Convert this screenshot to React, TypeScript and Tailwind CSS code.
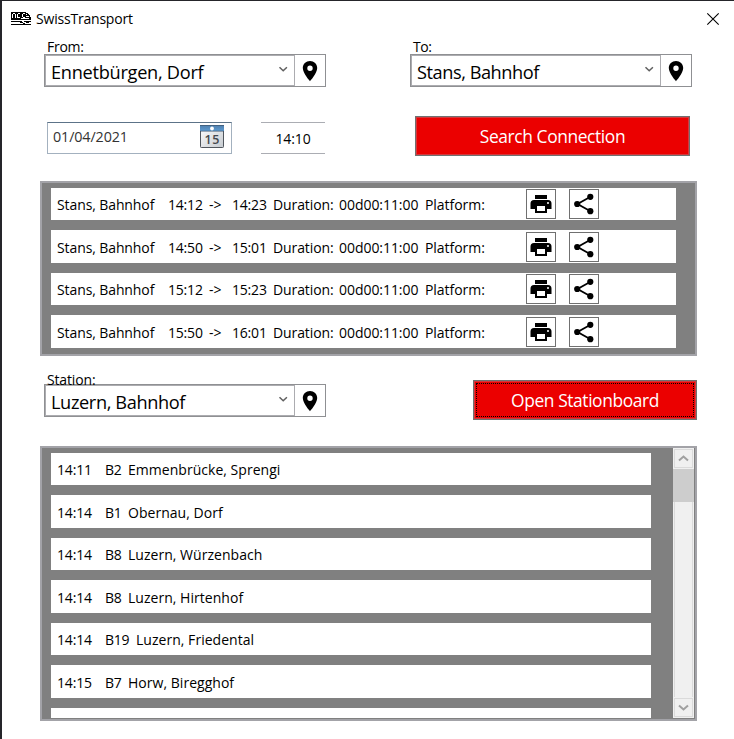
import React from "react";

const connections = [
  { dep: "14:12", arr: "14:23", h: "h-[32px] leading-[34px]", mb: "mb-[10px]", pt: "pt-px" },
  { dep: "14:50", arr: "15:01", h: "h-[33px] leading-[35px]", mb: "mb-[10px]", pt: "pt-[2px]" },
  { dep: "15:12", arr: "15:23", h: "h-[32px] leading-[34px]", mb: "mb-[10px]", pt: "pt-px" },
  { dep: "15:50", arr: "16:01", h: "h-[33px] leading-[36px]", mb: "", pt: "pt-[2px]" },
];

const departures = [
  { time: "14:11", line: "B2", dest: "Emmenbrücke, Sprengi", h: "h-[32px] leading-[33px]", w: "w-[23px]" },
  { time: "14:14", line: "B1", dest: "Obernau, Dorf", h: "h-[33px] leading-[35px]", w: "w-[23px]" },
  { time: "14:14", line: "B8", dest: "Luzern, Würzenbach", h: "h-[32px] leading-[33px]", w: "w-[23px]" },
  { time: "14:14", line: "B8", dest: "Luzern, Hirtenhof", h: "h-[33px] leading-[35px]", w: "w-[23px]" },
  { time: "14:14", line: "B19", dest: "Luzern, Friedental", h: "h-[32px] leading-[33px]", w: "w-[31px]" },
  { time: "14:15", line: "B7", dest: "Horw, Biregghof", h: "h-[33px] leading-[35px]", w: "w-[23px]" },
];

function AppLogo() {
  return (
    <svg width="20" height="14" viewBox="0 0 20 14" fill="none" className="shrink-0" shapeRendering="crispEdges">
      <path d="M0 0H15V1H17V2H18V3H19V5H20V8H0Z" fill="#000" />
      <path d="M1.5 2V6M2 1.5H4M4.5 2V6M6.5 2V6M7 1.5H9M7 5.5H9M11.5 2V5M12 1.5H14M12 5.5H14M15 2.5H16M15 4.5H18M10 6.5H18" stroke="#fff" strokeWidth="1" />
      <path d="M0 9.5H11M13 9.5H20M0 12.5H20" stroke="#000" strokeWidth="1" />
      <path d="M9 10.5H12M12 11.5H14M15 10.5H18" stroke="#000" strokeWidth="1" />
    </svg>
  );
}

function Pin() {
  return (
    <svg width="24" height="24" viewBox="0 0 24 24" fill="#000">
      <path d="M12 2C8 2 4.8 5.1 4.8 9.1 4.8 14.3 12 22.3 12 22.3S19.2 14.3 19.2 9.1C19.2 5.1 16 2 12 2Zm0 10a2.7 2.7 0 1 1 0-5.4 2.7 2.7 0 0 1 0 5.4Z" />
    </svg>
  );
}

function StationPicker({ value, tracking }: { value: string; tracking: string }) {
  return (
    <div className="flex h-[33px] w-[282px] border border-[#8f9093] bg-white">
      <div className="flex h-[31px] w-[250px] border border-[#acacb0] bg-white">
        <div className={`h-[27px] w-[232px] overflow-hidden pl-[5px] text-[18.2px] leading-[32px] whitespace-nowrap ${tracking}`}>
          {value}
        </div>
        <svg width="10" height="7" viewBox="0 0 10 7" className="mt-[10px]" fill="none">
          <path d="M1.5 1.2 5.2 4.8 8.9 1.2" stroke="#606060" strokeWidth="1.5" />
        </svg>
      </div>
      <div className="flex w-[29px] items-center justify-center">
        <Pin />
      </div>
    </div>
  );
}

function IconButton({ children }: { children: React.ReactNode }) {
  return (
    <div className="flex h-[30px] w-[30px] shrink-0 items-center justify-center border border-[#707070] bg-white">{children}</div>
  );
}

function CalendarIcon() {
  return (
    <svg width="24" height="23" viewBox="0 0 24 23">
      <defs>
        <linearGradient id="calHead" x1="0" y1="0" x2="0" y2="1">
          <stop offset="0" stopColor="#4f7eac" />
          <stop offset="1" stopColor="#5d9bd1" />
        </linearGradient>
        <linearGradient id="calPage" x1="0" y1="0" x2="1" y2="1">
          <stop offset="0" stopColor="#fff" />
          <stop offset="1" stopColor="#c6cbd0" />
        </linearGradient>
      </defs>
      <rect x="0.5" y="0.5" width="23" height="22" rx="0.8" fill="url(#calPage)" stroke="#50565d" />
      <path d="M0 0H24V6H0Z" fill="url(#calHead)" />
      <path d="M0 0.5H24M0 6.2H24" stroke="#3d556d" strokeWidth="0.7" />
      <circle cx="12" cy="3.5" r="1.9" fill="#fff" />
      <text x="12.3" y="19.3" textAnchor="middle" fontFamily="Open Sans, sans-serif" fontSize="12.5" fontWeight="600" letterSpacing="0.6" fill="#45494e">15</text>
    </svg>
  );
}

export default function App() {
  return (
    <div className="h-[739px] w-[734px] overflow-hidden bg-[#25252a] pt-px pl-[2px] font-['Open_Sans','Noto_Sans',sans-serif] text-[14px] text-black">
      <div className="flex h-[738px] w-[732px] flex-col bg-white">
        <header className="flex h-[37px] w-full shrink-0 pt-[11px] pl-[9px]">
          <AppLogo />
          <span className="-mt-[3px] ml-[5px] text-[14px] leading-[20px] tracking-[-0.2px]">SwissTransport</span>
          <svg width="14" height="14" viewBox="0 0 14 14" className="mr-[14px] ml-auto" fill="none">
            <path d="M1.3 1.3 12.7 12.7M12.7 1.3 1.3 12.7" stroke="#000" strokeWidth="1.1" />
          </svg>
        </header>

        <section className="flex shrink-0 pl-[42px]">
          <div className="w-[366px]">
            <div className="h-[16px] pl-[3px] text-[14px] leading-[17px] tracking-[-0.25px]">From:</div>
            <StationPicker value="Ennetbürgen, Dorf" tracking="tracking-[-0.28px]" />
          </div>
          <div>
            <div className="h-[16px] pl-[3px] text-[14px] leading-[17px] tracking-[-0.4px]">To:</div>
            <StationPicker value="Stans, Bahnhof" tracking="tracking-[-0.45px]" />
          </div>
        </section>

        <section className="mt-[29px] flex h-[40px] shrink-0 pl-[45px]">
          <div className="mt-[6px] flex h-[32px] w-[185px] justify-between border border-[#a3b1bf] border-t-[#5c7388] pr-[7px] pl-[5px]">
            <span className="text-[14.3px] leading-[28px] tracking-[-0.1px] text-[#333]">01/04/2021</span>
            <div className="mt-[2px]">
              <CalendarIcon />
            </div>
          </div>
          <div className="mt-[6px] ml-[29px] h-[32px] w-[64px] border-y border-[#abadb3] text-center text-[14px] leading-[32px] tracking-[-0.1px]">14:10</div>
          <button className="ml-[90px] h-[40px] w-[275px] border border-[#707070] bg-[#eb0000] text-[17.4px] leading-[39px] tracking-[-0.4px] text-white shadow-[inset_0_0_0_1px_#d6383c]">
            Search Connection
          </button>
        </section>

        <section className="mt-[25px] ml-[38px] h-[175px] w-[657px] shrink-0 border-2 border-[#a3a3a8] bg-[#808080] pt-[5px] pl-[9px]">
          {connections.map((c) => (
            <div key={c.dep} className={`flex w-[625px] bg-white pl-[6px] text-[14px] whitespace-nowrap ${c.h} ${c.mb}`}>
              <span className="w-[111px] tracking-[-0.1px]">Stans, Bahnhof</span>
              <span className="w-[41px] tracking-[-0.2px]">{c.dep}</span>
              <span className="w-[23px]">-&gt;</span>
              <span className="w-[41px] tracking-[-0.2px]">{c.arr}</span>
              <span className="w-[66px] tracking-[-0.1px]">Duration:</span>
              <span className="w-[86px] tracking-[-0.05px]">00d00:11:00</span>
              <span className="w-[101px] tracking-[-0.05px]">Platform:</span>
              <div className={`flex gap-[13px] ${c.pt}`}>
                <IconButton>
                  <svg width="24" height="24" viewBox="0 0 24 24" fill="#000">
                    <path d="M18 3H6v4h12V3ZM19 8H5a3.5 3.5 0 0 0-3.5 3.5V17H6v4h12v-4h4.5v-5.5A3.5 3.5 0 0 0 19 8Zm-3 11H8v-5h8v5Zm3-7a1 1 0 1 1 0-2 1 1 0 0 1 0 2Z" />
                  </svg>
                </IconButton>
                <IconButton>
                  <svg width="24" height="24" viewBox="0 0 24 24" fill="#000">
                    <path d="M18.5 4.7 5.5 12l13 7.3" fill="none" stroke="#000" strokeWidth="1.8" />
                    <circle cx="18.3" cy="4.8" r="3.1" />
                    <circle cx="5.2" cy="12" r="3.1" />
                    <circle cx="18.3" cy="19.2" r="3.1" />
                  </svg>
                </IconButton>
              </div>
            </div>
          ))}
        </section>

        <section className="mt-[14px] flex h-[50px] shrink-0 pl-[42px]">
          <div className="w-[429px]">
            <div className="h-[14px] pl-[3px] text-[14px] leading-[20px] tracking-[-0.15px]">Station:</div>
            <StationPicker value="Luzern, Bahnhof" tracking="tracking-[-0.38px]" />
          </div>
          <button className="mt-[10px] h-[40px] w-[224px] border border-[#707070] bg-[#eb0000] p-[2px] text-[17.4px] tracking-[-0.4px] text-white shadow-[inset_0_0_0_1px_#d6383c]">
            <span className="block h-[34px] w-[218px] border border-dotted border-black leading-[33px]">Open Stationboard</span>
          </button>
        </section>

        <section className="mt-[26px] ml-[38px] flex h-[275px] w-[657px] shrink-0 border-2 border-[#a3a3a8] bg-[#808080]">
          <div className="h-[270px] w-[631px] overflow-hidden pt-[5px] pl-[9px]">
            {departures.map((d, i) => (
              <div key={i} className={`mb-[10px] flex w-[600px] bg-white pl-[6px] whitespace-nowrap ${d.h}`}>
                <span className="w-[48px] tracking-[-0.15px]">{d.time}</span>
                <span className={`tracking-[-0.3px] ${d.w}`}>{d.line}</span>
                <span className="tracking-[0.03px]">{d.dest}</span>
              </div>
            ))}
            <div className="h-[32px] w-[600px] bg-white" />
          </div>
          <div className="flex h-[270px] w-[21px] flex-col bg-[#f0f0f0]">
            <div className="m-px flex h-[19px] shrink-0 items-center justify-center border border-[#dadada]">
              <svg width="11" height="7" viewBox="0 0 11 7" fill="none">
                <path d="M1 5.6 5.5 1.6 10 5.6" stroke="#a0a0a0" strokeWidth="2" />
              </svg>
            </div>
            <div className="h-[33px] shrink-0 bg-[#cdcdcd]" />
            <div className="mx-px flex-1 border-x border-[#dadada]" />
            <div className="m-px flex h-[19px] shrink-0 items-center justify-center border border-[#dadada]">
              <svg width="11" height="7" viewBox="0 0 11 7" fill="none">
                <path d="M1 1.4 5.5 5.4 10 1.4" stroke="#a0a0a0" strokeWidth="2" />
              </svg>
            </div>
          </div>
        </section>
      </div>
    </div>
  );
}
